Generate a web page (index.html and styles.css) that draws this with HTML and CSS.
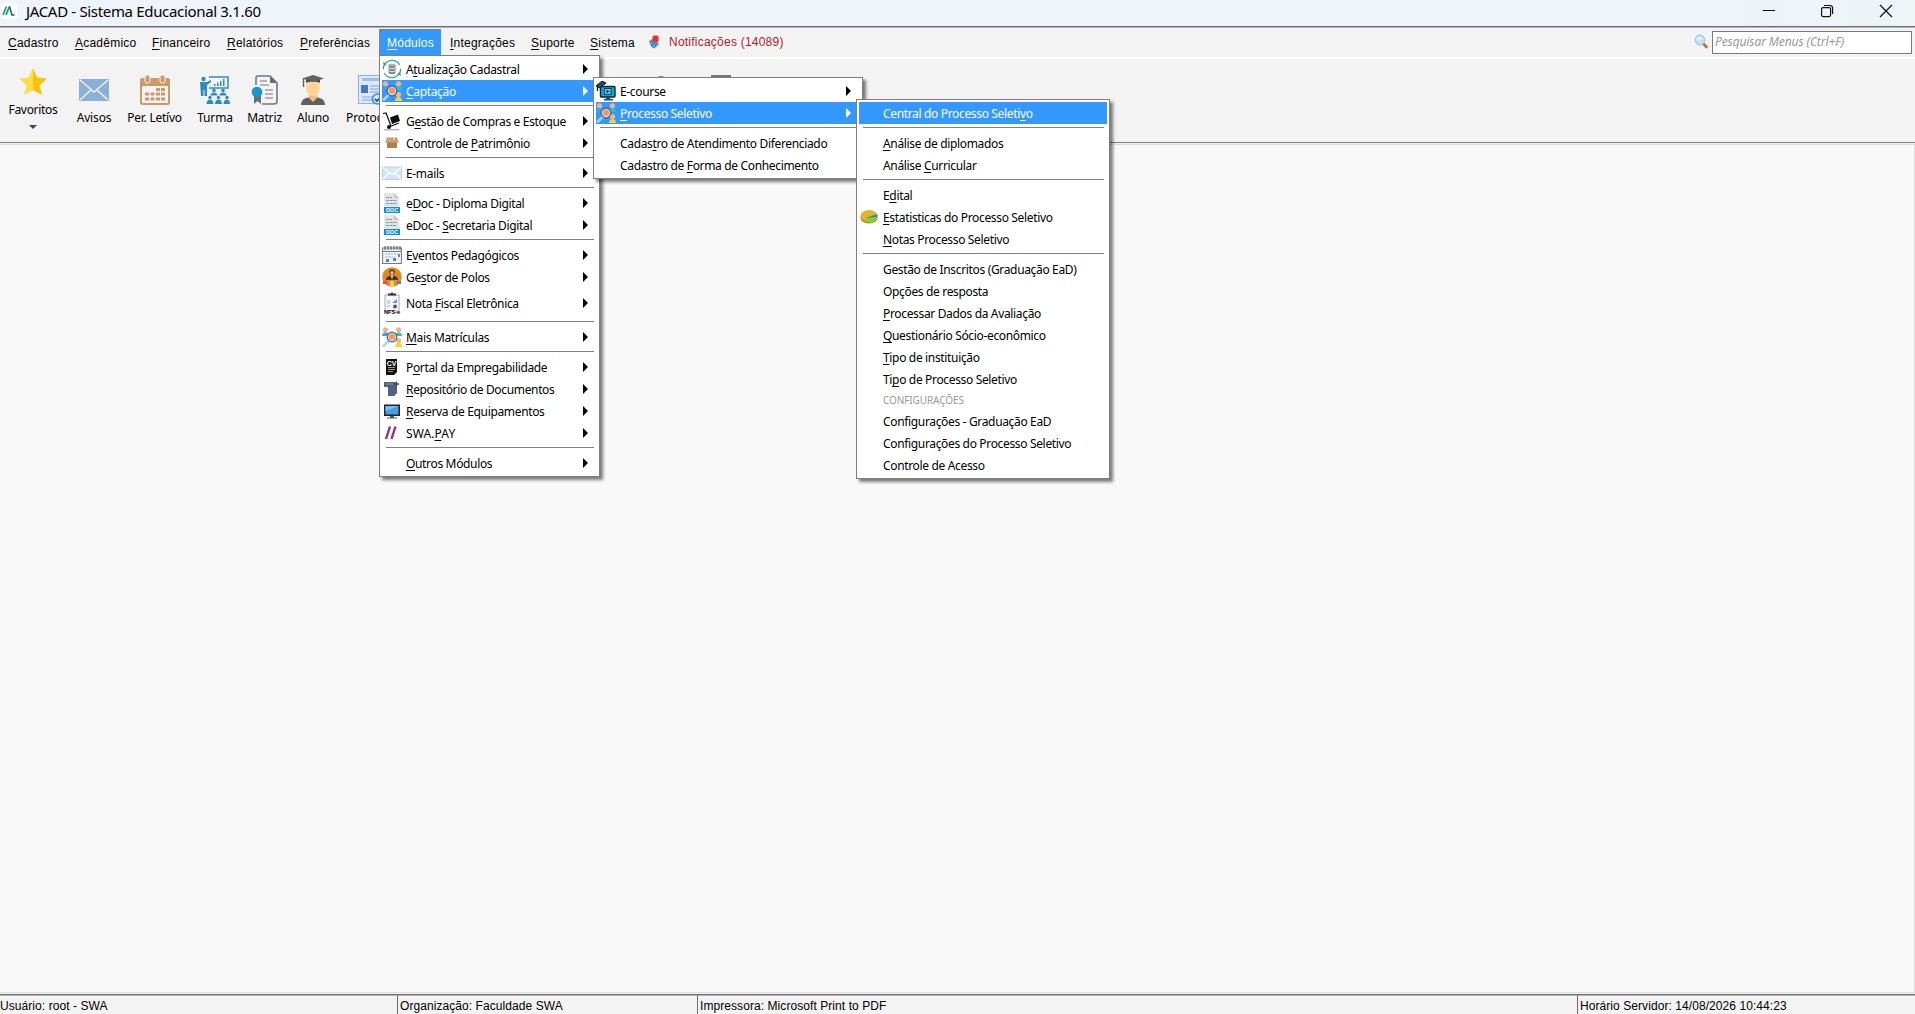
FILE: index.html
```html
<!DOCTYPE html>
<html lang="pt-BR">
<head>
<meta charset="UTF-8">
<title>JACAD - Sistema Educacional 3.1.60</title>
<link rel="stylesheet" href="styles.css">
</head>
<body>
    <svg class="defs" width="0" height="0">
        <symbol id="people" viewBox="0 0 20 20">
            <circle cx="3.500" cy="2.800" r="2.600" fill="#f5b28a"/><path d="M0 9c0-5 7-5 7 0z" fill="#3fa0ea"/>
            <circle cx="16.500" cy="2.800" r="2.600" fill="#f5b28a"/><path d="M13 9c0-5 7-5 7 0z" fill="#1fc8c4"/>
            <circle cx="16.500" cy="13.500" r="2.600" fill="#f9b384"/><path d="M13 20c0-5.500 7-5.500 7 0z" fill="#ffd51e"/>
            <path d="M1 19.500l6-6" stroke="#a9d3f8" stroke-width="2.600"/>
            <circle cx="10" cy="10" r="4.800" fill="#d7ebfa" stroke="#4d6077" stroke-width="1.200"/>
            <circle cx="10" cy="9.800" r="3.200" fill="#f8955c"/>
        </symbol>
    </svg>

    <div class="titlebar">
        <svg class="logo" width="16" height="16" viewBox="0 0 16 16">
            <rect width="16" height="16" rx="3" fill="#fff"/>
            <path d="M2 12L5.500 3.500M5 12L8.500 3.500" stroke="#12a383" stroke-width="1.800"/>
            <path d="M8.500 3.500L11 12h2.500" stroke="#2b5a60" stroke-width="1.500" fill="none"/>
        </svg>
        <span class="title">JACAD - Sistema Educacional 3.1.60</span>
        <div class="window-buttons">
            <svg width="14" height="14" viewBox="0 0 14 14"><path d="M2 6.500h12" stroke="#000"/></svg>
            <svg width="14" height="14" viewBox="0 0 14 14" fill="none" stroke="#111" stroke-width="1.200"><rect x="1.600" y="3.600" width="9" height="9" rx="1.500"/><path d="M4 1.500h6a2.600 2.600 0 0 1 2.600 2.600V10"/></svg>
            <svg width="14" height="14" viewBox="0 0 14 14"><path d="M1 1l12 12M13 1L1 13" stroke="#111" stroke-width="1.200"/></svg>
        </div>
    </div>

    <div class="menubar">
        <div class="menu-title w-cad"><u>C</u>adastro</div>
        <div class="menu-title w-aca"><u>A</u>cadêmico</div>
        <div class="menu-title w-fin"><u>F</u>inanceiro</div>
        <div class="menu-title w-rel"><u>R</u>elatórios</div>
        <div class="menu-title w-pre"><u>P</u>referências</div>
        <div class="menu-title w-mod open"><u>M</u>ódulos</div>
        <div class="menu-title w-int"><u>I</u>ntegrações</div>
        <div class="menu-title w-sup"><u>S</u>uporte</div>
        <div class="menu-title w-sis"><u>S</u>istema</div>
        <div class="notice">
            <svg width="14" height="14" viewBox="0 0 14 14"><path d="M1 6l5-3 5 6-3 3-5-1z" fill="#4a90cf"/><path d="M3 11l3 2 2-2" stroke="#2f6ea8" fill="none"/><rect x="4.500" y=".5" width="6" height="6.500" rx="1.500" fill="#ee2f2f"/></svg>
            <span>Notificações (14089)</span>
        </div>
        <div class="search">
            <svg width="16" height="16" viewBox="0 0 16 16"><path d="M9.500 10l3 3" stroke="#b87333" stroke-width="2.600" stroke-linecap="round"/><circle cx="6" cy="6" r="4.800" fill="#c4def8" stroke="#9fc3ec" stroke-width="1.200"/><ellipse cx="5.500" cy="4.500" rx="3" ry="2" fill="#e4f1fd"/></svg>
            <input type="text" placeholder="Pesquisar Menus (Ctrl+F)">
        </div>
    </div>

    <div class="toolbar">
        <div class="tool fav">
            <svg width="30" height="30" viewBox="0 0 30 30"><path d="M15 1l4.200 9.600L29 11.500l-7.500 7L24 28l-9-5z" fill="#ffc107"/><path d="M15 1l-4.200 9.600L1 11.500l7.500 7L6 28l9-5z" fill="#ffdb4d"/></svg>
            <span>Favoritos</span>
            <i class="drop"></i>
        </div>
        <div class="tool t-avi">
            <svg width="30" height="30" viewBox="0 0 30 30"><rect y="4" width="30" height="22" fill="#8aafd9"/><path d="M1 5l14 12L29 5M1 25l11-10M29 25L18 15" stroke="#f3f3f3" stroke-width="1.400" fill="none"/></svg>
            <span>Avisos</span>
        </div>
        <div class="tool t-per">
            <svg width="30" height="30" viewBox="0 0 30 30" fill="#cb9a68"><path d="M2 3h26a2 2 0 0 1 2 2v23a2 2 0 0 1-2 2H2a2 2 0 0 1-2-2V5a2 2 0 0 1 2-2zm0 8v17h26V11z" fill-rule="evenodd"/><rect x="5" y="0" width="5" height="8" rx="2" stroke="#f3f3f3"/><rect x="20" y="0" width="5" height="8" rx="2" stroke="#f3f3f3"/><path d="M16 13h4v3h-4zM21 13h4v3h-4zM5 17.500h4v3H5zM10.500 17.500h4v3h-4zM16 17.500h4v3h-4zM21 17.500h4v3h-4zM5 22.500h4v3H5zM10.500 22.500h4v3h-4zM16 22.500h4v3h-4zM21 22.500h4v3h-4z"/></svg>
            <span>Per. Letívo</span>
        </div>
        <div class="tool t-tur">
            <svg width="30" height="30" viewBox="0 0 30 30" fill="#2e8bc0"><circle cx="3.500" cy="4" r="2.200"/><path d="M0 7h7l4-2v2L7 10v11H4.500v-6H3.500v6H1z"/><path d="M9 2h19v11H9" fill="none" stroke="#2e8bc0" stroke-width="1.500"/><path d="M14 9h1.500v2H14zM17 7.500h1.500V11H17zM20 6h1.500v5H20zM23 4h1.500v7H23z"/><circle cx="14" cy="15.500" r="1.800"/><circle cx="23" cy="15.500" r="1.800"/><path d="M10.500 20.500c0-4 7-4 7 0zM19.500 20.500c0-4 7-4 7 0z"/><circle cx="10" cy="22.500" r="1.700"/><circle cx="18.500" cy="22.500" r="1.700"/><circle cx="27" cy="22.500" r="1.700"/><path d="M6.500 29c0-6 7-6 7 0zM15 29c0-6 7-6 7 0zM23.500 29c0-6 6.500-6 6.500 0z"/></svg>
            <span>Turma</span>
        </div>
        <div class="tool t-mat">
            <svg width="30" height="30" viewBox="0 0 30 30"><path d="M6 10V3q0-2 2-2h12l7 7v18q0 3-3 3H12" fill="none" stroke="#73777c" stroke-width="1.600"/><path d="M20 1v7h7z" fill="#686d73"/><path d="M10 6h7M10 10h9M15 15h8M15 19h8M15 23h8" stroke="#73777c" stroke-width="1.200"/><path d="M4 20h7v9l-3.500-3L4 29z" fill="#686d73"/><circle cx="7" cy="17" r="5.300" fill="#1e95c9"/></svg>
            <span>Matriz</span>
        </div>
        <div class="tool t-alu">
            <svg width="30" height="30" viewBox="0 0 30 30"><path d="M3 30c0-6 5-8 12-8s12 2 12 8z" fill="#606163"/><path d="M11 18h8v5l-4 4-4-4z" fill="#f2bd80"/><ellipse cx="15" cy="13" rx="6.800" ry="8.500" fill="#ffd296"/><path d="M8 4h14v4c-4-2-10-2-14 0z" fill="#4b4d4f"/><path d="M15 0l11 3.500L15 7 4 3.500z" fill="#606163"/><path d="M5.500 4v8" stroke="#606163" stroke-width="1.400"/></svg>
            <span>Aluno</span>
        </div>
        <div class="tool t-pro">
            <svg width="30" height="30" viewBox="0 0 30 30"><rect x=".5" y=".5" width="24" height="28" fill="#dce8fb" stroke="#8fb1ec"/><path d="M4 4.500h17" stroke="#9dbcf0" stroke-width="3"/><rect x="3" y="10" width="7" height="8" fill="#4777c4"/><path d="M12 11h9M12 14h9M12 17h9M4 22h10M4 25h10" stroke="#9dbcf0" stroke-width="1.300"/><circle cx="19.500" cy="24" r="5" fill="#d3e9f5" stroke="#338ec9" stroke-width="1.600"/><path d="M17 24l2 2 4-4" stroke="#275c9e" stroke-width="1.800" fill="none"/></svg>
            <span>Protocolo</span>
        </div>
        <div class="tool t-fin">
            <svg width="30" height="30" viewBox="0 0 30 30"><circle cx="15" cy="8" r="7" fill="#3c9d68"/></svg>
        </div>
        <div class="tool t-imp">
            <svg width="30" height="30" viewBox="0 0 30 30"><rect x="6" y="1" width="18" height="16" fill="#ddd" stroke="#777" stroke-width="2"/></svg>
        </div>
    </div>

    <div class="desktop"></div>

    <div class="statusbar">
        <div class="cell user">Usuário: root - SWA</div>
        <div class="cell org">Organização: Faculdade SWA</div>
        <div class="cell printer">Impressora: Microsoft Print to PDF</div>
        <div class="cell clock">Horário Servidor: 14/08/2026 10:44:23</div>
    </div>

    <div class="menu menu-modulos">
        <div class="item sub"><svg class="icon" viewBox="0 0 20 20"><circle cx="10" cy="10" r="8.700" fill="none" stroke="#36a58b" stroke-width="1.300" stroke-dasharray="23 4"/><path d="M1 3l1 4 3-2zM19 17l-1-4-3 2z" fill="#36a58b"/><path d="M6.500 6v8c0 1.500 7 1.500 7 0V6z" fill="#7d888c"/><ellipse cx="10" cy="6" rx="3.500" ry="1.300" fill="#a7b0b3"/><path d="M6.500 8.500c1 1.500 6 1.500 7 0M6.500 11.500c1 1.500 6 1.500 7 0" stroke="#fff" stroke-width=".8" fill="none"/></svg><span>A<u>t</u>ualização Cadastral</span></div>
        <div class="item sub active"><svg class="icon"><use href="#people"/></svg><span><u>C</u>aptação</span></div>
        <hr>
        <div class="item sub"><svg class="icon" viewBox="0 0 20 20"><path d="M1 2.500L4 2l5 13" stroke="#111" stroke-width="1.200" fill="none"/><path d="M8 6.500l8-3 2 6.500-8 3z" fill="#111"/><path d="M8 15.500l9-3.500" stroke="#111" stroke-width="1.200"/><circle cx="7" cy="16" r="2" fill="#111"/><path d="M2 18.800h15" stroke="#999"/></svg><span>G<u>e</u>stão de Compras e Estoque</span></div>
        <div class="item sub"><svg class="icon" viewBox="0 0 20 20"><path d="M5 9h10v6H5z" fill="#b07f4d"/><path d="M4 7h12l1 2.500H3z" fill="#d2a06b"/><path d="M5 7V5h3v2M9 7V5h2v2M13 7V5h2v2" stroke="#957156" stroke-width=".8" fill="#e3c7ab"/></svg><span>Controle de <u>P</u>atrimônio</span></div>
        <hr>
        <div class="item sub"><svg class="icon" viewBox="0 0 20 20"><rect x=".5" y="4" width="19" height="12.500" fill="#d4e6f8" stroke="#b8d2ec"/><path d="M1 4.500l9 7 9-7M1 16l6-6M19 16l-6-6" stroke="#fff" stroke-width="1.300" fill="none"/></svg><span>E-mails</span></div>
        <hr>
        <div class="item sub">
            <svg class="icon" viewBox="0 0 20 20"><path d="M2 0h10l5 5v9H2z" fill="#e4e5df"/><path d="M12 0v5h5z" fill="#c5c7bf"/><path d="M4 4.500h6M4 7.500h11M4 10.500h11" stroke="#7d96cd" stroke-dasharray="3 .6"/><rect x="2" y="14" width="16" height="6" fill="#0c92d8"/><text x="10" y="19" class="doc-tag">DOC</text></svg>
            <span>e<u>D</u>oc - Diploma Digital</span>
        </div>
        <div class="item sub">
            <svg class="icon" viewBox="0 0 20 20"><path d="M2 0h10l5 5v9H2z" fill="#e4e5df"/><path d="M12 0v5h5z" fill="#c5c7bf"/><path d="M4 4.500h6M4 7.500h11M4 10.500h11" stroke="#7d96cd" stroke-dasharray="3 .6"/><rect x="2" y="14" width="16" height="6" fill="#0c92d8"/><text x="10" y="19" class="doc-tag">DOC</text></svg>
            <span>eDoc - <u>S</u>ecretaria Digital</span>
        </div>
        <hr>
        <div class="item sub"><svg class="icon" viewBox="0 0 20 20"><rect x=".6" y="3" width="18.800" height="15.500" fill="#f2f4f6" stroke="#707b85"/><path d="M1 6.500h18" stroke="#707b85"/><path d="M3 1v4M6 1v4M9 1v4M12 1v4M15 1v4M18 1v4" stroke="#4a545d"/><path d="M3 9h13M3 12h10" stroke="#9ba5ad" stroke-dasharray="2 1"/><path d="M4 14h3v3H4zM11 13h3v3h-3zM16 9h2v3h-2z" fill="#4888d4"/></svg><span>E<u>v</u>entos Pedagógicos</span></div>
        <div class="item sub"><svg class="icon" viewBox="0 0 20 20"><circle cx="10" cy="10" r="9.800" fill="#e08b1d"/><path d="M4 13c0-6 12-6 12 0z" fill="#46322c"/><circle cx="10" cy="5" r="2.800" fill="#523629"/><circle cx="10" cy="5.800" r="1.800" fill="#f3b58c"/><path d="M9 8h2l-1 5z" fill="#fff"/><path d="M1 14h4v3H1z" fill="#e54565"/><path d="M8 14h4v5H8z" fill="#ffd43c"/><path d="M15 14h4v3h-4z" fill="#4086cd"/></svg><span>Ge<u>s</u>tor de Polos</span></div>
        <div class="item sub tall"><svg class="icon nota" viewBox="0 0 20 22"><path d="M3 3h14v16H3z" fill="#f8f8f8" stroke="#aaa"/><path d="M6 2.500h8M10 .5v2" stroke="#333" stroke-width="1.800"/><path d="M10 11l5-4v4z" fill="#4b9ae4"/><path d="M5 9h3M5 11h3M5 14h3" stroke="#aaa"/><circle cx="13" cy="14.500" r="2" fill="#4f5f6a"/><text x="10" y="21.500" class="nfse">NFS-e</text></svg><span>Nota <u>F</u>iscal Eletrônica</span></div>
        <hr>
        <div class="item sub"><svg class="icon"><use href="#people"/></svg><span><u>M</u>ais Matrículas</span></div>
        <hr>
        <div class="item sub"><svg class="icon" viewBox="0 0 20 20"><path d="M4 2h11v13l-3 3H4z" fill="#111"/><path d="M6 10.500h7M6 12.500h7M6 14.500h5" stroke="#bbb" stroke-width=".8"/><text x="9.500" y="8.500" class="cv">CV</text></svg><span>P<u>o</u>rtal da Empregabilidade</span></div>
        <div class="item sub"><svg class="icon" viewBox="0 0 20 20"><path d="M2 3h11l2 2v9l-3 3H6V8H2z" fill="#53627c"/><path d="M4 5h7" stroke="#8592a8"/><path d="M12 5h5M14.500 2.500v5" stroke="#33435e" stroke-width="1.300"/></svg><span><u>R</u>epositório de Documentos</span></div>
        <div class="item sub"><svg class="icon" viewBox="0 0 20 20"><rect x="2" y="3.500" width="16" height="11.500" fill="#222"/><path d="M3.500 5h13v8.500h-13z" fill="#439fe7"/><path d="M3.500 5h13l-13 5z" fill="#79c2f5"/><path d="M8 15h4v1.500h3v1H5v-1h3z" fill="#555"/></svg><span><u>R</u>eserva de Equipamentos</span></div>
        <div class="item sub caps"><svg class="icon" viewBox="0 0 20 20"><path d="M4 16L8 3.500M9.500 16l4-12.500" stroke="#87358c" stroke-width="2.400"/></svg><span>SWA.<u>P</u>AY</span></div>
        <hr>
        <div class="item sub"><i class="icon"></i><span><u>O</u>utros Módulos</span></div>
    </div>

    <div class="menu menu-captacao">
        <div class="item sub"><svg class="icon" viewBox="0 0 20 20"><rect x="4.500" y="5.500" width="14.500" height="10.500" rx="1" fill="#14a5d8" stroke="#0c2434" stroke-width="1.400"/><rect x="8.500" y="7.500" width="6.500" height="6" fill="#52d0f2" stroke="#0c2434" stroke-width=".8"/><path d="M10.500 8.800l3 1.700-3 1.700z" fill="#0c2434"/><path d="M10 16h4v2h3v1.500H8V18h2z" fill="#14506f"/><path d="M0 5l6-5 4 2-6 5z" fill="#174b66" stroke="#071723"/><path d="M1.500 6v4" stroke="#071723" stroke-width="1.300"/></svg><span>E-course</span></div>
        <div class="item sub active"><svg class="icon"><use href="#people"/></svg><span><u>P</u>rocesso Seletivo</span></div>
        <hr>
        <div class="item"><i class="icon"></i><span>Cadas<u>t</u>ro de Atendimento Diferenciado</span></div>
        <div class="item"><i class="icon"></i><span>Cadastro de <u>F</u>orma de Conhecimento</span></div>
    </div>

    <div class="menu menu-processo">
        <div class="item active"><i class="icon"></i><span>Central do Processo Seleti<u>v</u>o</span></div>
        <hr>
        <div class="item"><i class="icon"></i><span><u>A</u>nálise de diplomados</span></div>
        <div class="item"><i class="icon"></i><span>Análise <u>C</u>urricular</span></div>
        <hr>
        <div class="item"><i class="icon"></i><span>E<u>d</u>ital</span></div>
        <div class="item"><svg class="icon" viewBox="0 0 20 20"><ellipse cx="10" cy="10.500" rx="8.500" ry="6" fill="#a97c0c"/><ellipse cx="10" cy="9" rx="8.500" ry="6" fill="#e5b32b"/><path d="M6 11.500L18 7c1.500 4-2 8.500-8 9-2-1-3.500-3-4-4.500z" fill="#8ccc35"/><path d="M7 11l11-4c.5 1 .5 2 0 3z" fill="#2f8fa8"/></svg><span><u>E</u>statisticas do Processo Seletivo</span></div>
        <div class="item"><i class="icon"></i><span><u>N</u>otas Processo Seletivo</span></div>
        <hr>
        <div class="item"><i class="icon"></i><span>Gestão de Inscritos (Graduação EaD)</span></div>
        <div class="item"><i class="icon"></i><span>Opções de resposta</span></div>
        <div class="item"><i class="icon"></i><span><u>P</u>rocessar Dados da Avaliação</span></div>
        <div class="item"><i class="icon"></i><span><u>Q</u>uestionário Sócio-econômico</span></div>
        <div class="item"><i class="icon"></i><span><u>T</u>ipo de instituição</span></div>
        <div class="item"><i class="icon"></i><span>Ti<u>p</u>o de Processo Seletivo</span></div>
        <div class="heading">CONFIGURAÇÕES</div>
        <div class="item"><i class="icon"></i><span>Configurações - Graduação EaD</span></div>
        <div class="item"><i class="icon"></i><span>Configurações do Processo Seletivo</span></div>
        <div class="item"><i class="icon"></i><span>Controle de Acesso</span></div>
    </div>
</body>
</html>
```
FILE: styles.css
```css
* {
    margin: 0;
    padding: 0;
    box-sizing: border-box;
}
body {
    height: 1014px;
    display: flex;
    flex-direction: column;
    overflow: hidden;
    background: #f3f3f3;
    color: #000;
    font-family: "Noto Sans", "Open Sans", sans-serif;
    font-size: 12px;
}
svg {
    display: block;
    flex: none;
}
u {
    text-underline-offset: 2px;
    text-decoration-thickness: 1px;
    text-decoration-skip-ink: none;
}
.defs {
    position: absolute;
}

/* title bar */
.titlebar {
    display: flex;
    flex: none;
    align-items: center;
    height: 28px;
    padding: 0 22px 5px 1px;
    background: linear-gradient(90deg, #eff3fa 90%, #edf5f7);
    border-bottom: 1px solid #b4b4b4;
    box-shadow: inset 0 -1px #6e6e6e;
}
.title {
    margin-left: 9px;
    font-size: 15px;
    line-height: 22px;
    letter-spacing: -0.33px;
}
.window-buttons {
    display: flex;
    gap: 45px;
    margin-left: auto;
}

/* menu bar */
.menubar {
    display: flex;
    flex: none;
    height: 31px;
    border-bottom: 2px solid #fff;
    font-family: "Liberation Sans", Arial, sans-serif;
    letter-spacing: 0.23px;
}
.menu-title {
    height: 28px;
    margin-top: 1px;
    padding-left: 8px;
    line-height: 29px;
    white-space: nowrap;
}
.menu-title.open {
    background: #3399ff;
    color: #fff;
    border: 1px solid #808080;
    border-bottom: 0;
    border-right-color: #3399ff;
    padding-left: 7px;
    line-height: 27px;
}
.w-cad { width: 67px; }
.w-aca { width: 77px; }
.w-fin { width: 75px; }
.w-rel { width: 73px; }
.w-pre { width: 87px; }
.w-mod { width: 62px; }
.w-int {
    width: 82px;
    padding-left: 9px;
}
.w-sup { width: 59px; }
.w-sis { width: 66px; }
.notice {
    display: flex;
    align-items: center;
    gap: 7px;
    height: 27px;
    color: #b3202f;
}
.search {
    display: flex;
    align-items: center;
    gap: 2px;
    height: 27px;
    margin-left: auto;
    padding: 0 3px 0 0;
}
.search input {
    width: 200px;
    height: 23px;
    margin-top: 1px;
    padding: 0 2px 1px;
    border: 1px solid #7a7a7a;
    background: #fff;
    font: italic 12px "Noto Sans", "Open Sans", sans-serif;
    letter-spacing: -0.1px;
}
.search input::placeholder {
    color: #999;
}

/* toolbar */
.toolbar {
    display: flex;
    flex: none;
    height: 84px;
    border-bottom: 1px solid #808080;
}
.tool {
    display: flex;
    flex: none;
    flex-direction: column;
    align-items: center;
    padding-top: 16px;
    letter-spacing: -0.15px;
    white-space: nowrap;
}
.tool span {
    margin-top: 5px;
    line-height: 16px;
}
.fav {
    width: 66px;
    padding-top: 8px;
    letter-spacing: -0.3px;
}
.drop {
    margin-top: 7px;
    border: 4px solid transparent;
    border-top-color: #2c4a6b;
    border-bottom: 0;
}
.t-avi { width: 56px; }
.t-per {
    width: 65px;
    letter-spacing: -0.25px;
}
.t-tur { width: 56px; }
.t-mat { width: 43px; }
.t-alu { width: 54px; }
.t-pro {
    width: 66px;
    letter-spacing: 0;
}
.t-fin { width: 70px; margin-left: 220px; }
.t-imp { width: 50px; }

/* empty work area */
.desktop {
    flex: 1;
    margin-top: 1px;
    background: #f9f9f9;
    border: 1px solid #dedede;
    border-left: 0;
}

/* status bar */
.statusbar {
    display: flex;
    flex: none;
    height: 20px;
    margin-top: 1px;
    background: #f3f3f3;
    border-top: 1px solid #6e6e6e;
    font-family: "Liberation Sans", Arial, sans-serif;
    letter-spacing: 0.07px;
}
.cell {
    height: 19px;
    padding-left: 2px;
    line-height: 20px;
    border-left: 1px solid #6e6e6e;
    border-top: 1px solid #b4b4b4;
    white-space: nowrap;
}
.user {
    width: 397px;
    padding-left: 0;
    border-left: 0;
}
.org { width: 300px; }
.printer { width: 880px; }
.clock { flex: 1; }

/* popup menus */
.menu {
    position: absolute;
    padding: 2px;
    background: #fff;
    border: 1px solid #808080;
    box-shadow: 3px 3px 3px rgba(0, 0, 0, 0.5);
}
.menu-modulos {
    left: 379px;
    top: 55px;
    width: 221px;
}
.menu-captacao {
    left: 593px;
    top: 77px;
    width: 270px;
}
.menu-processo {
    left: 856px;
    top: 99px;
    width: 254px;
}
.menu hr {
    height: 1px;
    margin: 3px 3px 4px 4px;
    border: 0;
    background: #808080;
}
.item {
    display: flex;
    align-items: center;
    height: 22px;
    white-space: nowrap;
    line-height: 20px;
    letter-spacing: -0.34px;
}
.item span {
    padding-top: 2px;
}
.item.tall {
    height: 30px;
}
.item.caps {
    letter-spacing: 0.1px;
}
.item.active {
    background: #3399ff;
    color: #fff;
}
.icon {
    width: 20px;
    height: 20px;
    margin-right: 4px;
}
.icon.nota {
    height: 22px;
}
.sub::after {
    content: "";
    margin: 0 9px 0 auto;
    border: 5px solid transparent;
    border-left: 5px solid #000;
    border-right: 0;
}
.sub.active::after {
    border-left-color: #fff;
}
.heading {
    height: 20px;
    padding-left: 24px;
    color: #999;
    font-size: 10px;
    line-height: 20px;
    letter-spacing: -0.1px;
}
.doc-tag {
    fill: #fff;
    font: bold 5.5px "Liberation Sans", sans-serif;
    letter-spacing: 0;
    text-anchor: middle;
}
.nfse {
    font: bold 5.5px "Liberation Sans", sans-serif;
    letter-spacing: 0;
    text-anchor: middle;
}
.cv {
    fill: #fff;
    font: bold 7px "Liberation Sans", sans-serif;
    letter-spacing: 0;
    text-anchor: middle;
}
```
